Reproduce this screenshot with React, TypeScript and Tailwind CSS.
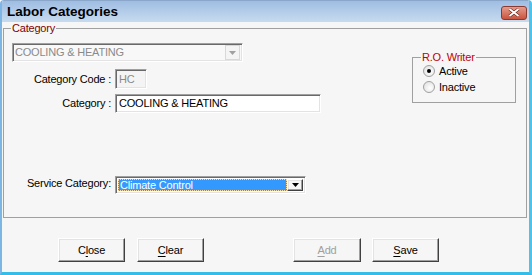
import React from 'react';

const font = { fontFamily: '"Liberation Sans", Arial, sans-serif' };

const sunken =
  'border border-t-[#a0a0a0] border-l-[#a0a0a0] border-b-white border-r-white shadow-[inset_1px_1px_0_#696969,inset_-1px_-1px_0_#e3e3e3]';
const raised =
  'border border-t-white border-l-white border-b-[#404040] border-r-[#404040] shadow-[inset_-1px_-1px_0_#a0a0a0,inset_1px_1px_0_#e3e3e3]';

const Radio = ({ checked, label }: { checked?: boolean; label: string }) => (
  <div className="flex items-center h-[16px]">
    <span className="w-[12px] h-[12px] rounded-full border border-[#a0a0a0] bg-[radial-gradient(circle_at_60%_60%,#ffffff,#dcdcdc)] flex items-center justify-center">
      {checked && <span className="w-[4px] h-[4px] rounded-full bg-black" />}
    </span>
    <span className="ml-[4px] text-black">{label}</span>
  </div>
);

const Btn = ({ pre, key1, post, disabled, className }: { pre?: string; key1: string; post: string; disabled?: boolean; className?: string }) => (
  <button className={`w-[67px] h-[24px] bg-[#f6f6f6] ${raised} ${disabled ? 'text-[#a0a0a0]' : 'text-black'} ${className ?? ''}`}>
    {pre}
    <span className="underline underline-offset-2">{key1}</span>
    {post}
  </button>
);

export default function App() {
  return (
    <div className="w-[532px] h-[275px] flex flex-col bg-[#f6f6f6] text-[11px] tracking-[-0.2px] border-l-2 border-r-[3px] border-b-[3px] border-l-[#7db6e4] border-r-[#4cc3ea] border-b-[#33bde8] rounded-t-[4px] overflow-hidden" style={font}>
      {/* 标题栏 */}
      <div className="h-[22px] shrink-0 flex items-center justify-between pl-[5px] pr-[2px] pt-[2px] bg-gradient-to-b from-[#9fbde2] to-[#c7dbef] border-t border-[#8aa6c8]">
        <span className="text-[13.5px] font-bold text-black tracking-normal">Labor Categories</span>
        <div className="w-[26px] h-[14px] rounded-[3px] border border-[#8a3a2e] bg-gradient-to-b from-[#e59b8c] to-[#c9533f] flex items-center justify-center">
          <svg width="12" height="9" viewBox="0 0 12 9">
            <path d="M1.5 1 L10.5 8 M10.5 1 L1.5 8" stroke="#5a1a10" strokeWidth="3" />
            <path d="M1.5 1 L10.5 8 M10.5 1 L1.5 8" stroke="#ffffff" strokeWidth="2" />
          </svg>
        </div>
      </div>

      {/* Category 分组 */}
      <fieldset className="ml-[1px] mr-[2px] h-[196px] border border-[#a0a0a0] px-[7px] pb-0">
        <legend className="px-[1px] leading-[13px] text-[#800000]">Category</legend>
        <div className="flex justify-between">
          <div className="flex flex-col">
            <div className={`ml-[1px] mt-[8px] w-[231px] h-[19px] bg-[#f8f8f8] ${sunken} flex items-center justify-between pl-[2px] pr-[2px]`}>
              <span className="text-[#8a8a8a]">COOLING &amp; HEATING</span>
              <div className="w-[15px] h-[15px] border border-[#d8d8d8] bg-[#f4f4f4] flex items-center justify-center">
                <svg width="7" height="4" viewBox="0 0 7 4"><path d="M0 0 H7 L3.5 4 Z" fill="#a0a0a0" /></svg>
              </div>
            </div>

            <div className="grid grid-cols-[100px_auto] gap-x-[4px] items-center mt-[7px]">
              <span className="text-right">Category Code :</span>
              <div className={`w-[32px] h-[20px] bg-[#f4f4f4] ${sunken} flex items-center pl-[3px] text-[#8a8a8a]`}>HC</div>
              <span className="text-right mt-[5px]">Category :</span>
              <div className={`mt-[5px] w-[206px] h-[19px] bg-white ${sunken} flex items-center pl-[3px] text-black`}>COOLING &amp; HEATING</div>
              <span className="text-right mt-[62px] mb-[3px]">Service Category:</span>
              <div className={`mt-[62px] w-[191px] h-[18px] bg-white ${sunken} flex items-center p-[2px]`}>
                <div className="flex-1 h-full bg-[#3399ff] border border-dotted border-[#ffd9a0] flex items-center pl-[1px] text-white">Climate Control</div>
                <div className={`w-[16px] h-full bg-[#f6f6f6] ${raised} flex items-center justify-center`}>
                  <svg width="7" height="4" viewBox="0 0 7 4"><path d="M0 0 H7 L3.5 4 Z" fill="#000" /></svg>
                </div>
              </div>
            </div>
          </div>

          {/* R.O. Writer */}
          <fieldset className="mt-[16px] mr-[3px] w-[104px] h-[52px] border border-[#a0a0a0] px-[8px]">
            <legend className="px-[1px] leading-[13px] text-[#c00000]">R.O. Writer</legend>
            <div className="flex flex-col pl-[2px] -mt-[1px]">
              <Radio checked label="Active" />
              <Radio label="Inactive" />
            </div>
          </fieldset>
        </div>
      </fieldset>

      {/* 按钮 */}
      <div className="flex mt-[20px] ml-[56px]">
        <Btn pre="C" key1="l" post="ose" />
        <Btn key1="C" post="lear" className="ml-[12px]" />
        <Btn key1="A" post="dd" disabled className="ml-[89px] w-[68px]" />
        <Btn key1="S" post="ave" className="ml-[11px]" />
      </div>
    </div>
  );
}
